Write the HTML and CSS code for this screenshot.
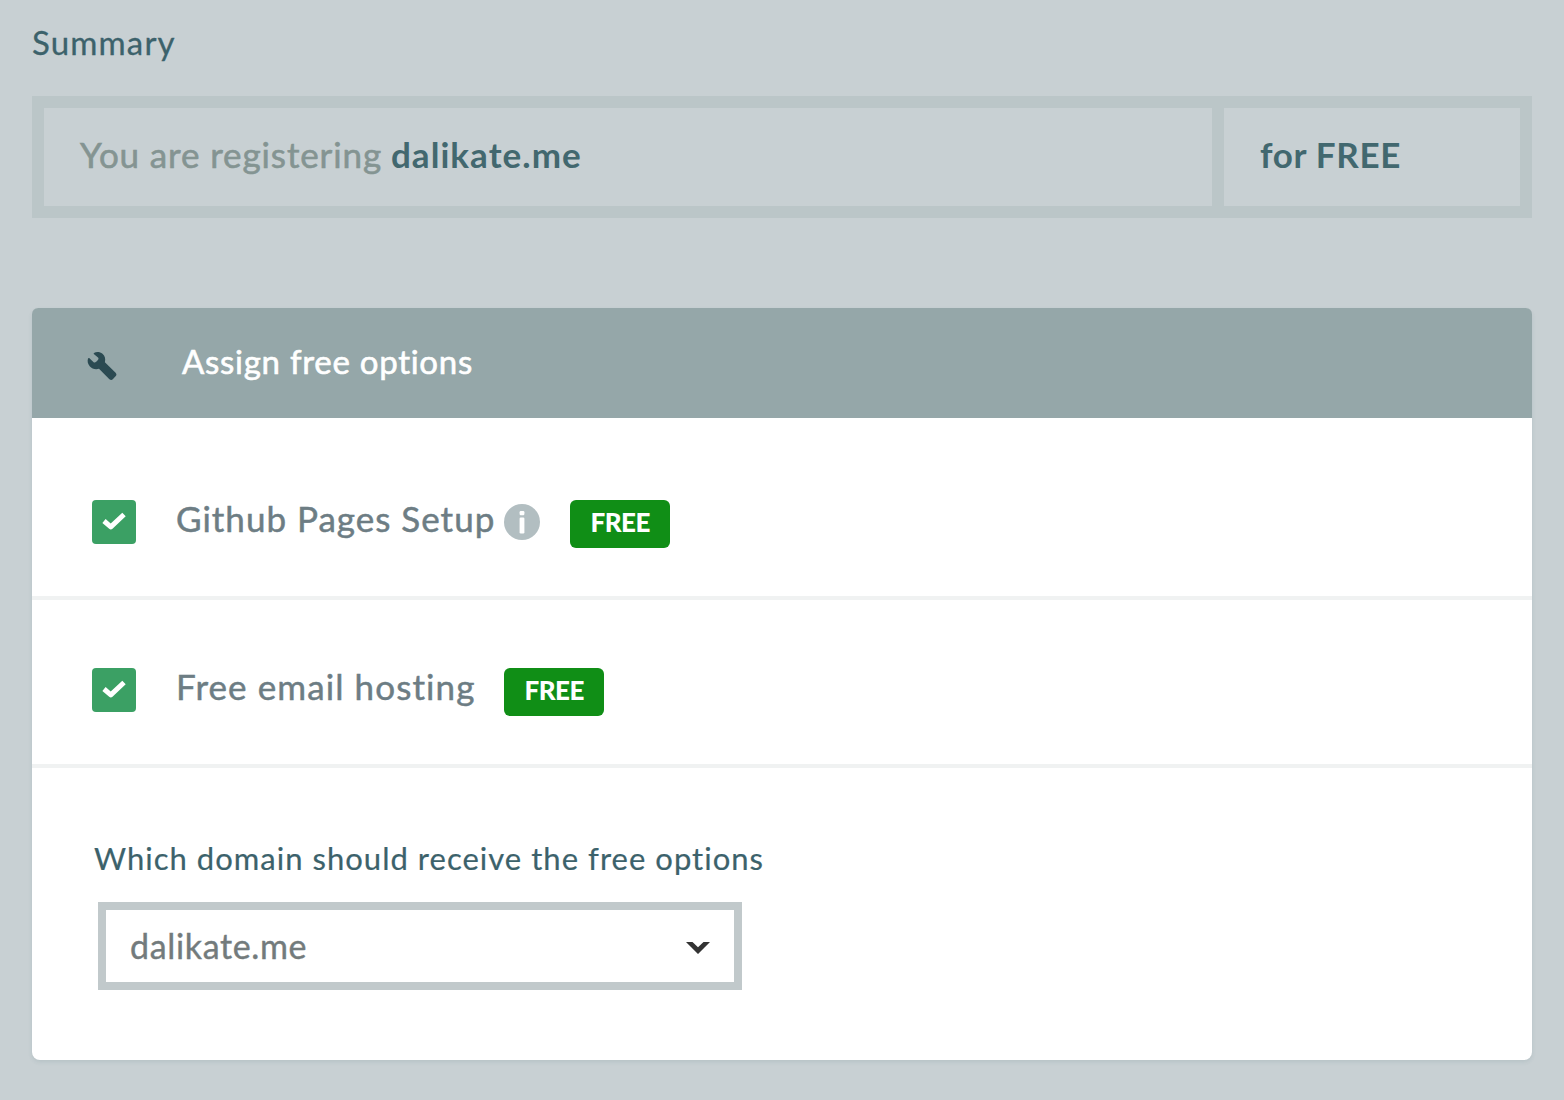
FILE: index.html
```html
<!DOCTYPE html>
<html lang="en">
<head>
<meta charset="utf-8">
<title>Summary</title>
<link rel="stylesheet" href="styles.css">
</head>
<body>
<main class="page">
  <h1 class="heading">Summary</h1>

  <section class="summary">
    <div class="summary-cell"><p><span class="lead">You are registering</span> <strong class="domain">dalikate.me</strong></p></div>
    <div class="summary-cell"><p><strong class="price">for FREE</strong></p></div>
  </section>

  <section class="card">
    <header class="card-header">
      <svg class="wrench" viewBox="0 0 30 30" width="30" height="30" aria-hidden="true">
        <path d="M7 1.900C9.200 .5 13 .5 15.500 2.800C18 5.100 18.700 8 17.900 11.200L28.600 21.700C29.700 22.900 29.700 24 28.800 25L26 28C25 29.200 23.600 29.300 22.400 28.200L12 17.800C8.500 18.800 5 17.900 2.700 15.300C.7 13 .2 10 1 7.600C1.400 6.900 2.100 6.900 2.700 7.400L6.400 11C7.200 11.800 8.300 11.600 9.200 10.700L10.700 9.200C11.600 8.300 11.800 7.400 11 6.600L7.100 3.200C6.600 2.700 6.600 2.200 7 1.900Z" fill="#2b4a52"/>
      </svg>
      <h2 class="card-title">Assign free options</h2>
    </header>

    <div class="option">
      <span class="checkbox" role="checkbox" aria-checked="true">
        <svg viewBox="0 0 44 44" width="44" height="44"><path d="M12 21L18.800 26.800L32 14.500" fill="none" stroke="#fff" stroke-width="5" stroke-linejoin="round"/></svg>
      </span>
      <span class="option-label github">Github Pages Setup</span>
      <svg class="info" viewBox="0 0 36 36" width="36" height="36" aria-hidden="true">
        <circle cx="18" cy="18" r="18" fill="#b2bec1"/>
        <rect x="15.600" y="7" width="4.800" height="4.200" rx="1.200" fill="#fff"/>
        <rect x="15.600" y="13.500" width="4.800" height="16" rx="1.200" fill="#fff"/>
      </svg>
      <span class="badge">FREE</span>
    </div>

    <div class="option second">
      <span class="checkbox" role="checkbox" aria-checked="true">
        <svg viewBox="0 0 44 44" width="44" height="44"><path d="M12 21L18.800 26.800L32 14.500" fill="none" stroke="#fff" stroke-width="5" stroke-linejoin="round"/></svg>
      </span>
      <span class="option-label email">Free email hosting</span>
      <span class="badge">FREE</span>
    </div>

    <div class="assign">
      <p class="question">Which domain should receive the free options</p>
      <div class="select" role="combobox">
        <span class="select-value">dalikate.me</span>
        <svg class="arrow" viewBox="0 0 24 12" width="24" height="12" aria-hidden="true"><path d="M0 0H6.500L12 5.300L17.500 0H24L12 12Z" fill="#333"/></svg>
      </div>
    </div>
  </section>
</main>
</body>
</html>
```
FILE: styles.css
```css
* {
  box-sizing: border-box;
}

body {
  margin: 0;
  background: #c8d0d3;
  font-family: Lato, "Liberation Sans", sans-serif;
  color: #3c626b;
}

h1, h2, p {
  margin: 0;
  font-weight: 400;
  white-space: nowrap;
}

.page {
  height: 1100px;
  padding: 22px 32px 0;
}

.heading {
  height: 74px;
  font-size: 33px;
  line-height: 40px;
  letter-spacing: 1.15px;
  -webkit-text-stroke: 0.3px;
}

.summary {
  display: grid;
  grid-template-columns: 1168px 1fr;
  gap: 12px;
  height: 122px;
  padding: 12px;
  background: #bbc6c8;
}

.summary-cell {
  padding: 26px 36px;
  background: #c8d0d3;
  font-size: 35px;
  line-height: 41px;
}

.summary-cell strong {
  color: #42686f;
  font-weight: 700;
}

.domain {
  letter-spacing: 1.05px;
}

.price {
  letter-spacing: 0.7px;
}

.lead {
  color: #849492;
  letter-spacing: 0.88px;
  -webkit-text-stroke: 0.6px;
}

.card {
  height: 752px;
  margin-top: 90px;
  border-radius: 8px;
  background: #fff;
  box-shadow: 0 2px 4px rgba(60, 98, 107, 0.12);
}

.card-header {
  display: flex;
  height: 110px;
  padding: 33px 55px;
  gap: 65px;
  border-radius: 6px 6px 0 0;
  background: #95a7a9;
}

.wrench {
  margin-top: 10px;
}

.card-title {
  color: #fff;
  font-size: 33px;
  line-height: 41px;
  letter-spacing: 0.72px;
  -webkit-text-stroke: 0.6px;
}

.option {
  display: flex;
  height: 182px;
  padding: 82px 60px 0;
  border-bottom: 4px solid #f0f2f2;
}

.option.second {
  height: 168px;
  padding-top: 68px;
}

.checkbox {
  width: 44px;
  height: 44px;
  margin-right: 40px;
  border-radius: 4px;
  background: #3ba064;
}

.checkbox svg,
.info,
.arrow {
  display: block;
}

.option-label {
  width: 328px;
  height: 40px;
  margin-top: -2px;
  color: #6d7d84;
  font-size: 35px;
  line-height: 41px;
  letter-spacing: 1px;
  white-space: nowrap;
  -webkit-text-stroke: 0.5px;
}

.email {
  letter-spacing: 1.1px;
}

.info {
  margin: 4px 30px 0 0;
}

.badge {
  width: 100px;
  height: 48px;
  padding-left: 20.5px;
  border-radius: 6px;
  background: #108e16;
  color: #fff;
  font-size: 26px;
  font-weight: 900;
  line-height: 45px;
  letter-spacing: -0.5px;
}

.assign {
  padding: 70px 62px;
}

.question {
  font-size: 31px;
  line-height: 41px;
  letter-spacing: 1.02px;
  -webkit-text-stroke: 0.2px;
}

.select {
  display: flex;
  align-items: center;
  justify-content: space-between;
  width: 644px;
  height: 88px;
  margin: 23px 0 0 4px;
  padding: 0 24px;
  border: 8px solid #c1c9cb;
}

.select-value {
  color: #737b7c;
  font-size: 34px;
  line-height: 40px;
  letter-spacing: 0.65px;
  -webkit-text-stroke: 0.4px;
}

.arrow {
  margin-top: 4px;
}
```
